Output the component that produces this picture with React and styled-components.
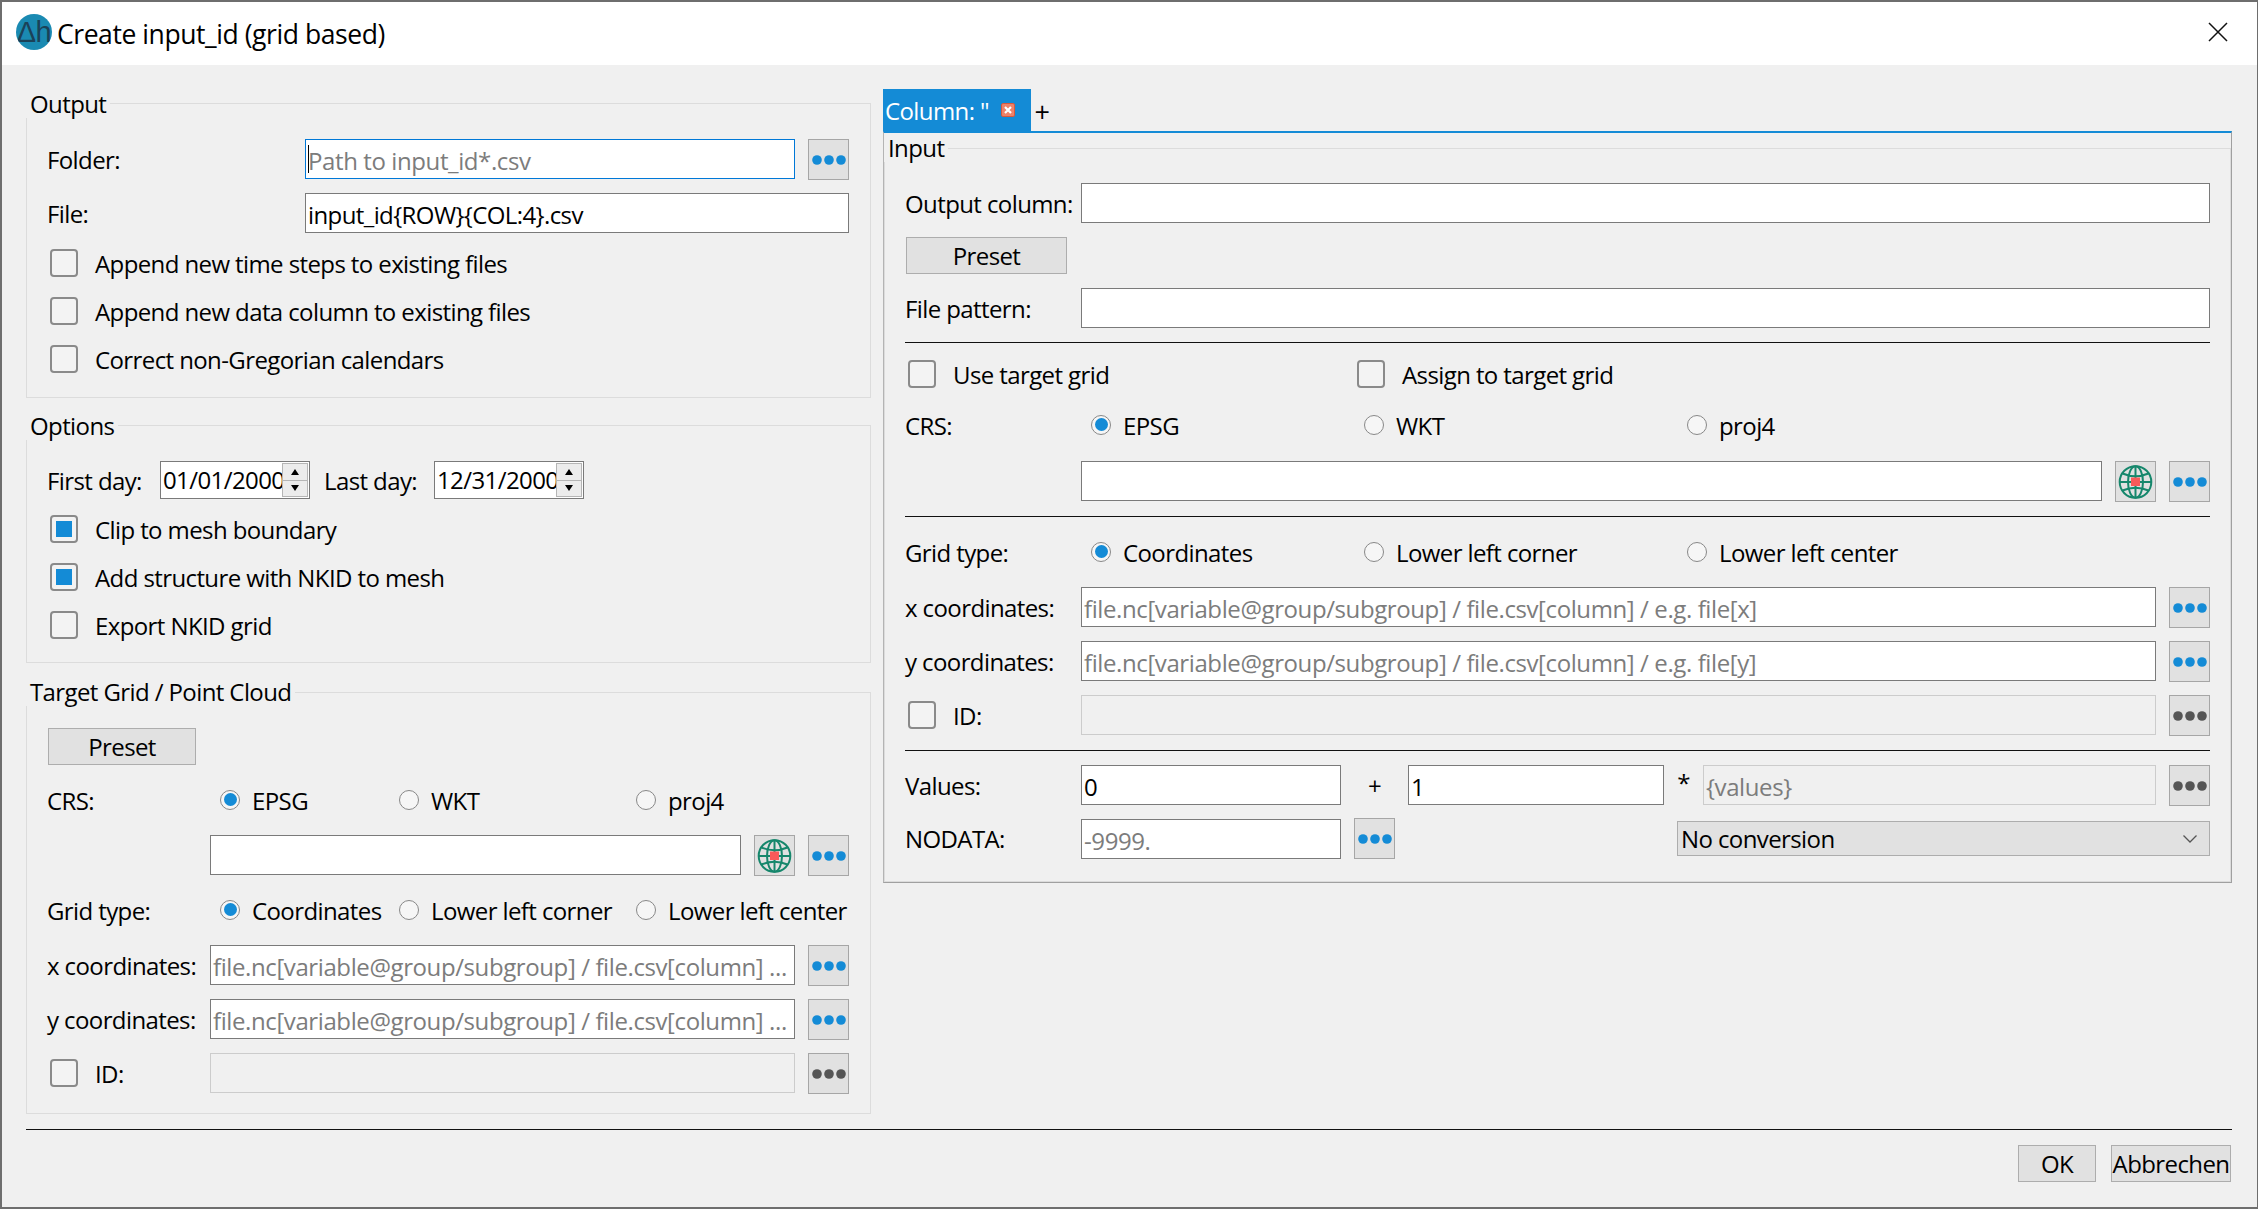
import React from "react";
import styled, { createGlobalStyle } from "styled-components";

const Global = createGlobalStyle`
  html, body { margin: 0; padding: 0; background: #6e6e6e; }
  * { box-sizing: border-box; }
`;

const BLUE = "#148bd6";

const Window = styled.div`
  width: 2258px;
  height: 1209px;
  display: flex;
  flex-direction: column;
  border-style: solid;
  border-color: #6e6e6e;
  border-width: 2px 1px 2px 2px;
  background: #f0f0f0;
  color: #000;
  font-family: "Open Sans", "Noto Sans", sans-serif;
  font-size: 24px;
  letter-spacing: -0.6px;
  overflow: hidden;
`;

const TitleBar = styled.header`
  height: 63px;
  flex: none;
  background: #fff;
  display: flex;
  align-items: center;
  padding: 0 29px 0 14px;
`;

const Logo = styled.span`
  width: 36px;
  height: 36px;
  flex: none;
  border-radius: 50%;
  background: #1a8ab2;
  color: #1b4258;
  font-family: "Liberation Sans", sans-serif;
  font-size: 29px;
  letter-spacing: -0.5px;
  line-height: 36px;
  text-align: center;
  white-space: nowrap;
  overflow: hidden;
  margin-bottom: 3px;
`;

const Title = styled.h1`
  flex: 1;
  margin: 0 0 0 5px;
  font-family: inherit;
  font-weight: 400;
  font-size: 26.5px;
  letter-spacing: -0.43px;
`;

const Content = styled.div`
  flex: 1;
  display: flex;
  flex-direction: column;
  padding: 0 25px 0 24px;
`;

const Main = styled.div`
  display: flex;
  gap: 12px;
  align-items: flex-start;
`;

const LeftColumn = styled.div`
  width: 845px;
  flex: none;
  padding-top: 38px;
`;

const RightColumn = styled.div`
  flex: 1;
  padding-top: 24px;
`;

const Group = styled.section`
  position: relative;
  border: 1px solid #dcdcdc;
  margin-top: ${(p) => p.$mt || 0}px;
  padding: ${(p) => p.$pt || 35}px ${(p) => p.$pr || 21}px ${(p) => p.$pb}px 20px;
`;

const Legend = styled.span`
  position: absolute;
  left: -1px;
  top: ${(p) => p.$top ?? -14}px;
  height: 28px;
  line-height: 28px;
  padding: 0 4px;
  background: #f0f0f0;
`;

const Row = styled.div`
  display: flex;
  align-items: flex-start;
  gap: ${(p) => p.$gap ?? 13}px;
  margin-top: ${(p) => p.$mt || 0}px;
`;

const Label = styled.span`
  flex: none;
  width: ${(p) => p.$w}px;
  height: ${(p) => p.$h || 40}px;
  display: flex;
  align-items: center;
  margin-left: ${(p) => p.$ml || 0}px;
  white-space: nowrap;
`;

const Spacer = styled.span`
  flex: none;
  width: ${(p) => p.$w}px;
`;

const Field = styled.div`
  position: relative;
  height: 40px;
  margin-top: ${(p) => p.$mt || 0}px;
  ${(p) => (p.$w ? `flex: none; width: ${p.$w}px;` : "flex: 1; min-width: 0;")}
  display: flex;
  align-items: center;
  padding: 2px 0 0 2px;
  overflow: hidden;
  white-space: nowrap;
  background: ${(p) => (p.$disabled ? "#f0f0f0" : "#fff")};
  border: 1px solid ${(p) => (p.$focus ? "#0078d7" : p.$disabled ? "#cccccc" : "#7a7a7a")};
  color: ${(p) => (p.$hint ? "#7c7c7c" : "#000")};
  letter-spacing: ${(p) => (p.$hint ? "-0.4px" : "inherit")};
`;

const Caret = styled.span`
  position: absolute;
  left: 2px;
  top: 5px;
  bottom: 5px;
  width: 1px;
  background: #000;
`;

const Square = styled.button`
  flex: none;
  width: 41px;
  height: 41px;
  padding: 0;
  margin-left: ${(p) => p.$ml || 0}px;
  display: flex;
  align-items: center;
  justify-content: center;
  background: #e1e1e1;
  border: 1px solid #a6a6a6;
`;

const PushButton = styled.button`
  flex: none;
  display: block;
  width: ${(p) => p.$w}px;
  height: 37px;
  padding: 0;
  margin-left: ${(p) => p.$ml || 0}px;
  margin-top: ${(p) => p.$mt || 0}px;
  background: #e1e1e1;
  border: 1px solid #adadad;
  color: #000;
  font: inherit;
  letter-spacing: inherit;
`;

const CheckRow = styled.label`
  display: flex;
  align-items: center;
  gap: 17px;
  height: ${(p) => p.$h || 28}px;
  ${(p) => (p.$w ? `width: ${p.$w}px; flex: none;` : "")}
  padding-left: 3px;
  margin-top: ${(p) => p.$mt || 0}px;
  margin-left: ${(p) => p.$ml || 0}px;
  white-space: nowrap;
`;

const CheckBox = styled.span`
  flex: none;
  width: 28px;
  height: 28px;
  border: 2px solid #8a8a8a;
  border-radius: 4px;
  padding: 4px;
  background: #f3f3f3;
  &::after {
    content: "";
    display: ${(p) => (p.$checked ? "block" : "none")};
    width: 16px;
    height: 16px;
    background: ${BLUE};
  }
`;

const RadioRow = styled.div`
  display: flex;
  align-items: center;
  height: 40px;
  padding-bottom: 3px;
  margin-top: ${(p) => p.$mt || 0}px;
`;

const RadioItem = styled.label`
  flex: none;
  width: ${(p) => p.$w}px;
  display: flex;
  align-items: center;
  gap: 12px;
  white-space: nowrap;
`;

const RadioMark = styled.span`
  flex: none;
  width: 20px;
  height: 20px;
  margin-bottom: 2px;
  border: 1.5px solid #888;
  border-radius: 50%;
  background: #f6f6f6;
  display: flex;
  align-items: center;
  justify-content: center;
  &::after {
    content: "";
    display: ${(p) => (p.$checked ? "block" : "none")};
    width: 13px;
    height: 13px;
    border-radius: 50%;
    background: ${BLUE};
  }
`;

const Spin = styled.div`
  flex: none;
  width: 150px;
  height: 38px;
  display: flex;
  align-items: stretch;
  background: #fff;
  border: 1px solid #7a7a7a;
`;

const SpinText = styled.span`
  flex: 1;
  min-width: 0;
  overflow: hidden;
  white-space: nowrap;
  padding: 0 0 0 2px;
  line-height: 36px;
`;

const SpinButtons = styled.span`
  flex: none;
  width: 26px;
  margin: 1px 1px 1px 0;
  display: flex;
  flex-direction: column;
  border: 1px solid #b5b5b5;
  background: #ececec;
`;

const SpinStep = styled.span`
  flex: 1;
  display: flex;
  align-items: center;
  justify-content: center;
  & + & { border-top: 1px solid #b5b5b5; }
  &::after {
    content: "";
    border-left: 4px solid transparent;
    border-right: 4px solid transparent;
    ${(p) => (p.$up ? "border-bottom: 6px solid #000;" : "border-top: 6px solid #000;")}
  }
`;

const Rule = styled.hr`
  margin: ${(p) => p.$mt || 0}px 0 0 0;
  height: 1px;
  border: 0;
  background: #111;
  flex: none;
`;

const TabBar = styled.div`
  height: 42px;
  display: flex;
  align-items: stretch;
`;

const Tab = styled.div`
  width: 148px;
  display: flex;
  align-items: center;
  padding: 0 16px 0 2px;
  background: ${BLUE};
  color: #fff;
  white-space: nowrap;
`;

const TabName = styled.span`
  flex: 1;
`;

const TabClose = styled.span`
  flex: none;
  width: 14px;
  height: 14px;
  border-radius: 2px;
  background: #ee8269;
  border: 1px solid #d8583c;
  display: flex;
  align-items: center;
  justify-content: center;
`;

const AddTab = styled.span`
  margin-left: 1px;
  width: 20px;
  display: flex;
  align-items: center;
  justify-content: center;
  font-size: 27px;
  padding-top: 2px;
`;

const Pane = styled.div`
  border-top: 2px solid ${BLUE};
  border-left: 1px solid #b4b4b4;
  border-right: 1px solid #a0a0a0;
  border-bottom: 1px solid #a0a0a0;
  padding-top: 15px;
`;

const SymbolCell = styled.span`
  flex: none;
  width: ${(p) => p.$w}px;
  text-align: center;
  line-height: ${(p) => p.$lh}px;
`;

const Combo = styled.div`
  flex: 1;
  height: 35px;
  margin: 3px 0 0 282px;
  display: flex;
  align-items: center;
  justify-content: space-between;
  padding: 0 11px 0 3px;
  background: #e1e1e1;
  border: 1px solid #adadad;
`;

const Footer = styled.footer`
  display: flex;
  justify-content: flex-end;
  gap: 15px;
  margin-top: 15px;
  padding-right: 1px;
`;

const Dots = ({ dim }) => (
  <svg width="34" height="10" viewBox="0 0 34 10" aria-hidden="true">
    {[5, 17, 29].map((cx) => (
      <circle key={cx} cx={cx} cy="5" r="4.8" fill={dim ? "#555" : BLUE} />
    ))}
  </svg>
);

const Globe = () => (
  <svg width="35" height="36" viewBox="0 0 35 36" fill="none" stroke="#16876c" strokeWidth="2" aria-hidden="true">
    <circle cx="17.5" cy="18" r="15.8" />
    <ellipse cx="17.5" cy="18" rx="7.5" ry="15.8" />
    <path d="M17.5 2v32" />
    <path d="M4.5 9.5Q17.5 15 30.5 9.5" />
    <path d="M2 18h31" />
    <path d="M4.5 26.5Q17.5 21 30.5 26.5" />
    <rect x="13" y="13.5" width="9" height="8.5" fill="#fa5a5a" stroke="none" />
  </svg>
);

const CloseGlyph = styled((props) => (
  <svg width="20" height="20" viewBox="0 0 20 20" stroke="#111" strokeWidth="1.5" aria-hidden="true" {...props}>
    <path d="M1 1l18 18M19 1L1 19" />
  </svg>
))`
  flex: none;
  margin-bottom: 3px;
`;

const TinyCross = () => (
  <svg width="8" height="8" viewBox="0 0 8 8" stroke="#fff" strokeWidth="2.2" aria-hidden="true">
    <path d="M1 1l6 6M7 1L1 7" />
  </svg>
);

const Chevron = () => (
  <svg width="16" height="10" viewBox="0 0 16 10" fill="none" stroke="#555" strokeWidth="1.3" aria-hidden="true">
    <path d="M1.5 1.5L8 8l6.5-6.5" />
  </svg>
);

const Check = ({ checked, children, ...rest }) => (
  <CheckRow {...rest}>
    <CheckBox $checked={checked} />
    <span>{children}</span>
  </CheckRow>
);

const Radio = ({ checked, w, children }) => (
  <RadioItem $w={w}>
    <RadioMark $checked={checked} />
    <span>{children}</span>
  </RadioItem>
);

const SpinBox = ({ value }) => (
  <Spin>
    <SpinText>{value}</SpinText>
    <SpinButtons>
      <SpinStep $up />
      <SpinStep />
    </SpinButtons>
  </Spin>
);

const LONG = "file.nc[variable@group/subgroup] / file.csv[column] ...";
const LONG_X = "file.nc[variable@group/subgroup] / file.csv[column] / e.g. file[x]";
const LONG_Y = "file.nc[variable@group/subgroup] / file.csv[column] / e.g. file[y]";

const OutputGroup = () => (
  <Group $pb={24}>
    <Legend>Output</Legend>
    <Row>
      <Label $w={245}>Folder:</Label>
      <Field $hint $focus>
        <Caret />
        Path to input_id*.csv
      </Field>
      <Square><Dots /></Square>
    </Row>
    <Row $mt={13}>
      <Label $w={245}>File:</Label>
      <Field>input_id{"{ROW}{COL:4}"}.csv</Field>
    </Row>
    <Check $mt={16}>Append new time steps to existing files</Check>
    <Check $mt={20}>Append new data column to existing files</Check>
    <Check $mt={20}>Correct non-Gregorian calendars</Check>
  </Group>
);

const OptionsGroup = () => (
  <Group $mt={27} $pb={23}>
    <Legend>Options</Legend>
    <Row $gap={0}>
      <Label $w={113} $h={38}>First day:</Label>
      <SpinBox value="01/01/2000" />
      <Label $w={110} $h={38} $ml={14}>Last day:</Label>
      <SpinBox value="12/31/2000" />
    </Row>
    <Check $mt={16} checked>Clip to mesh boundary</Check>
    <Check $mt={20} checked>Add structure with NKID to mesh</Check>
    <Check $mt={20}>Export NKID grid</Check>
  </Group>
);

const TargetGroup = () => (
  <Group $mt={29} $pb={19}>
    <Legend $top={-15}>Target Grid / Point Cloud</Legend>
    <PushButton $w={148} $ml={1}>Preset</PushButton>
    <RadioRow $mt={17}>
      <Label $w={173}>CRS:</Label>
      <Radio w={179} checked>EPSG</Radio>
      <Radio w={237}>WKT</Radio>
      <Radio w={213}>proj4</Radio>
    </RadioRow>
    <Row $mt={13}>
      <Spacer $w={150} />
      <Field />
      <Square><Globe /></Square>
      <Square><Dots /></Square>
    </Row>
    <RadioRow $mt={16}>
      <Label $w={173}>Grid type:</Label>
      <Radio w={179} checked>Coordinates</Radio>
      <Radio w={237}>Lower left corner</Radio>
      <Radio w={213}>Lower left center</Radio>
    </RadioRow>
    <Row $mt={13}>
      <Label $w={150}>x coordinates:</Label>
      <Field $hint>{LONG}</Field>
      <Square><Dots /></Square>
    </Row>
    <Row $mt={13}>
      <Label $w={150}>y coordinates:</Label>
      <Field $hint>{LONG}</Field>
      <Square><Dots /></Square>
    </Row>
    <Row $mt={13}>
      <Check $w={150} $h={40}>ID:</Check>
      <Field $disabled />
      <Square><Dots dim /></Square>
    </Row>
  </Group>
);

const InputGroup = () => (
  <Group $pt={34} $pr={20} $pb={22}>
    <Legend $top={-15}>Input</Legend>
    <Row $gap={0}>
      <Label $w={176}>Output column:</Label>
      <Field />
    </Row>
    <PushButton $w={161} $ml={1} $mt={14}>Preset</PushButton>
    <Row $gap={0} $mt={14}>
      <Label $w={176}>File pattern:</Label>
      <Field />
    </Row>
    <Rule $mt={14} />
    <Row $gap={0} $mt={17}>
      <Check $w={449}>Use target grid</Check>
      <Check>Assign to target grid</Check>
    </Row>
    <RadioRow $mt={19}>
      <Label $w={186}>CRS:</Label>
      <Radio w={273} checked>EPSG</Radio>
      <Radio w={323}>WKT</Radio>
      <Radio w={300}>proj4</Radio>
    </RadioRow>
    <Row $mt={14}>
      <Spacer $w={163} />
      <Field />
      <Square><Globe /></Square>
      <Square><Dots /></Square>
    </Row>
    <Rule $mt={14} />
    <RadioRow $mt={17}>
      <Label $w={186}>Grid type:</Label>
      <Radio w={273} checked>Coordinates</Radio>
      <Radio w={323}>Lower left corner</Radio>
      <Radio w={300}>Lower left center</Radio>
    </RadioRow>
    <Row $mt={13}>
      <Label $w={163}>x coordinates:</Label>
      <Field $hint>{LONG_X}</Field>
      <Square><Dots /></Square>
    </Row>
    <Row $mt={13}>
      <Label $w={163}>y coordinates:</Label>
      <Field $hint>{LONG_Y}</Field>
      <Square><Dots /></Square>
    </Row>
    <Row $mt={13}>
      <Check $w={163} $h={40}>ID:</Check>
      <Field $disabled />
      <Square><Dots dim /></Square>
    </Row>
    <Rule $mt={14} />
    <Row $gap={0} $mt={14}>
      <Label $w={176}>Values:</Label>
      <Field $w={260}>0</Field>
      <SymbolCell $w={67} $lh={41}>+</SymbolCell>
      <Field $w={256}>1</Field>
      <SymbolCell $w={39} $lh={36}>*</SymbolCell>
      <Field $disabled $hint>{"{values}"}</Field>
      <Square $ml={13}><Dots dim /></Square>
    </Row>
    <Row $gap={0} $mt={12}>
      <Label $w={176}>NODATA:</Label>
      <Field $w={260} $mt={1} $hint>-9999.</Field>
      <Square $ml={13}><Dots /></Square>
      <Combo>
        <span>No conversion</span>
        <Chevron />
      </Combo>
    </Row>
  </Group>
);

export default function App() {
  return (
    <>
      <Global />
      <Window>
        <TitleBar>
          <Logo>Δh</Logo>
          <Title>Create input_id (grid based)</Title>
          <CloseGlyph />
        </TitleBar>
        <Content>
          <Main>
            <LeftColumn>
              <OutputGroup />
              <OptionsGroup />
              <TargetGroup />
            </LeftColumn>
            <RightColumn>
              <TabBar>
                <Tab>
                  <TabName>Column: "</TabName>
                  <TabClose><TinyCross /></TabClose>
                </Tab>
                <AddTab>+</AddTab>
              </TabBar>
              <Pane>
                <InputGroup />
              </Pane>
            </RightColumn>
          </Main>
          <Rule $mt={15} />
          <Footer>
            <PushButton $w={78}>OK</PushButton>
            <PushButton $w={120}>Abbrechen</PushButton>
          </Footer>
        </Content>
      </Window>
    </>
  );
}
